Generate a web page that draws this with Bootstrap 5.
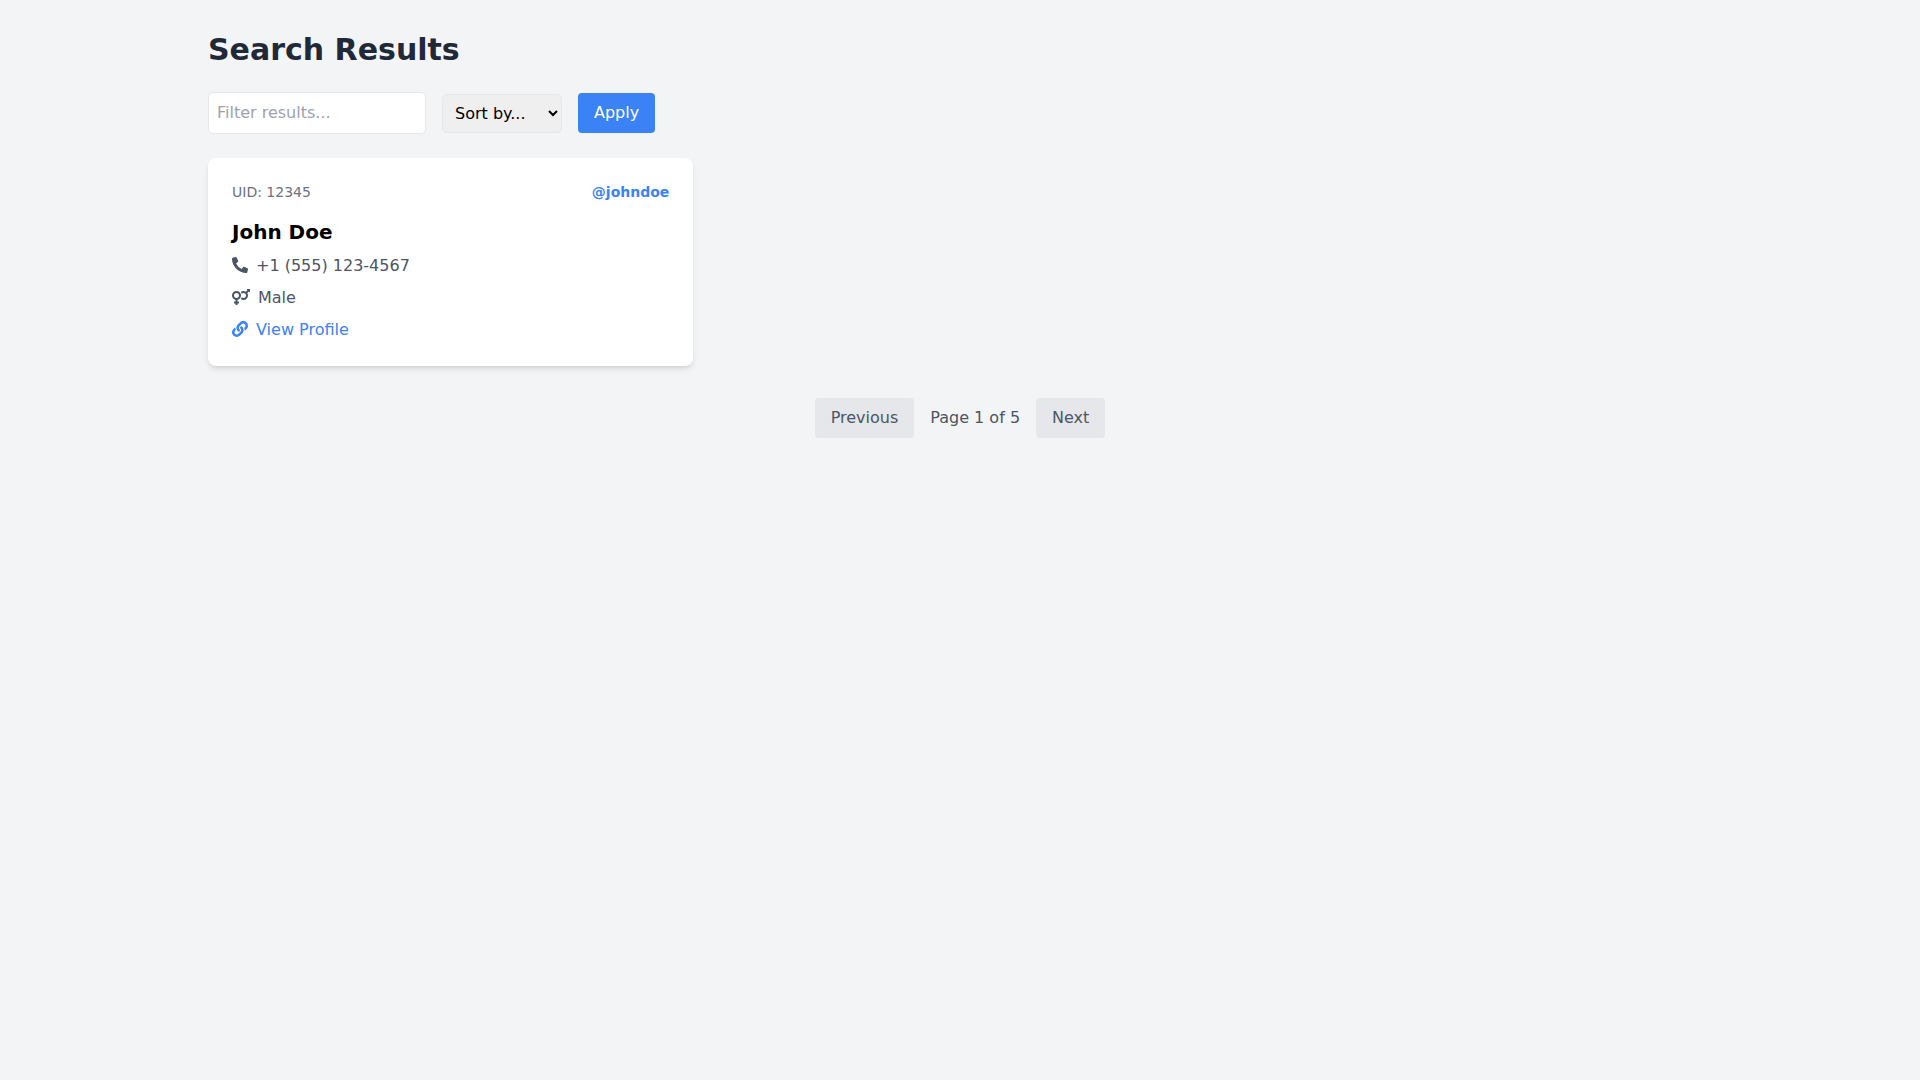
<!DOCTYPE html>
<html lang="en">
<head>
<meta charset="utf-8">
<title>Search Results</title>
<link href="https://cdn.jsdelivr.net/npm/bootstrap@5.3.0/dist/css/bootstrap.min.css" rel="stylesheet">
<style>
body{background:#f3f4f6;font-family:"DejaVu Sans",sans-serif;color:#1f2937;font-size:16px;line-height:24px}
.page-wrap{width:1536px;margin:0 auto;padding:32px 16px}
.page-title{font-size:30px;line-height:36px;font-weight:700;color:#1f2937;margin:0 0 24px}
.filter-input{width:218px;padding:8px;border:1px solid #e5e7eb;border-radius:5px;background:#fff;font:inherit;line-height:24px;color:#1f2937;outline:0}
.filter-input::placeholder{color:#9ca3af}
.sort-select{width:120px;height:39px;padding:8px;border:1px solid #e5e7eb;border-radius:5px;background:#efefef;font-size:16px;color:#000}
.apply-btn{background:#3b82f6;color:#fff;border:0;border-radius:4px;padding:8px 16px;font-size:16px;line-height:24px}
.result-grid{display:grid;grid-template-columns:repeat(3,1fr);gap:24px}
.result-card{background:#fff;border-radius:8px;padding:24px;box-shadow:0 4px 6px -1px rgba(0,0,0,.1),0 2px 4px -2px rgba(0,0,0,.1)}
.uid-text{font-size:14px;line-height:20px;color:#6b7280}
.user-handle{font-size:14px;line-height:20px;font-weight:700;color:#3b82f6;text-decoration:none}
.user-name{font-size:20px;line-height:28px;font-weight:700;color:#000;margin:0 0 8px}
.info-row{color:#4b5563;line-height:24px;margin-bottom:8px}
.info-row:last-child{margin-bottom:0}
.info-row svg{display:block;flex:none;fill:currentColor;height:16px;margin-bottom:2px}
.profile-link{color:#3b82f6;text-decoration:none}
.pager-wrap{margin-top:32px;color:#4b5563}
.pager-btn{background:#e5e7eb;color:#4b5563;border:0;border-radius:4px;padding:8px 16px;font-size:16px;line-height:24px}
</style>
</head>
<body>
<div class="page-wrap">
  <h1 class="page-title">Search Results</h1>
  <div class="d-flex align-items-center gap-3 mb-4">
    <input class="filter-input" type="text" placeholder="Filter results...">
    <select class="sort-select"><option>Sort by...</option><option>Name</option><option>UID</option></select>
    <button class="apply-btn" type="button">Apply</button>
  </div>
  <div class="result-grid">
    <div class="result-card">
      <div class="d-flex justify-content-between align-items-center mb-3">
        <span class="uid-text">UID: 12345</span>
        <a class="user-handle" href="#">@johndoe</a>
      </div>
      <h2 class="user-name">John Doe</h2>
      <div class="info-row d-flex align-items-center gap-2">
        <svg width="16" height="16" viewBox="0 0 512 512"><path d="M497.39 361.8l-112-48a24 24 0 0 0-28 6.9l-49.6 60.6A370.66 370.66 0 0 1 130.6 204.11l60.6-49.6a23.94 23.94 0 0 0 6.9-28l-48-112A24.16 24.16 0 0 0 122.6.61l-104 24A24 24 0 0 0 0 48c0 256.5 207.9 464 464 464a24 24 0 0 0 23.4-18.6l24-104a24.29 24.29 0 0 0-14.01-27.6z"/></svg>
        <span>+1 (555) 123-4567</span>
      </div>
      <div class="info-row d-flex align-items-center gap-2">
        <svg width="18" height="16" viewBox="0 0 576 512"><path d="M564 0h-79c-10.7 0-16 12.9-8.5 20.5l16.9 16.9-48.7 48.7C422.5 72.1 396.2 64 368 64c-33.7 0-64.6 11.6-89.2 30.9 14 16.7 25 36 32.1 57.1 14.5-14.8 34.7-24 57.1-24 44.1 0 80 35.9 80 80s-35.9 80-80 80c-22.3 0-42.6-9.2-57.1-24-7.1 21.1-18 40.4-32.1 57.1 24.5 19.4 55.5 30.9 89.2 30.9 79.5 0 144-64.5 144-144 0-28.2-8.1-54.5-22.1-76.7l48.7-48.7 16.9 16.9c2.4 2.4 5.4 3.5 8.4 3.5 6.2 0 12.1-4.8 12.1-12V12c0-6.6-5.4-12-12-12zM144 64C64.5 64 0 128.5 0 208c0 68.5 47.9 125.9 112 140.4V400H76c-6.6 0-12 5.4-12 12v40c0 6.6 5.4 12 12 12h36v36c0 6.6 5.4 12 12 12h40c6.6 0 12-5.4 12-12v-36h36c6.6 0 12-5.4 12-12v-40c0-6.6-5.4-12-12-12h-36v-51.6c64.1-14.6 112-71.9 112-140.4 0-79.5-64.5-144-144-144zm0 224c-44.1 0-80-35.9-80-80s35.9-80 80-80 80 35.9 80 80-35.9 80-80 80z"/></svg>
        <span>Male</span>
      </div>
      <div class="info-row d-flex align-items-center gap-2">
        <svg width="16" height="16" viewBox="0 0 512 512" class="profile-link"><path d="M326.612 185.391c59.747 59.809 58.927 155.698.36 214.59-.11.12-.24.25-.36.37l-67.2 67.2c-59.27 59.27-155.699 59.262-214.96 0-59.27-59.26-59.27-155.7 0-214.96l37.106-37.106c9.84-9.84 26.786-3.3 27.294 10.606.648 17.722 3.826 35.527 9.69 52.721 1.986 5.822.567 12.262-3.783 16.612l-13.087 13.087c-28.026 28.026-28.905 73.66-1.155 101.96 28.024 28.579 74.086 28.749 102.325.51l67.2-67.19c28.191-28.191 28.073-73.757 0-101.83-3.701-3.694-7.429-6.564-10.341-8.569a16.037 16.037 0 0 1-6.947-12.606c-.396-10.567 3.348-21.456 11.698-29.806l21.054-21.055c5.521-5.521 14.182-6.199 20.584-1.731a152.482 152.482 0 0 1 20.522 17.197zM467.547 44.449c-59.261-59.262-155.69-59.27-214.96 0l-67.2 67.2c-.12.12-.25.25-.36.37-58.566 58.892-59.387 154.781.36 214.59a152.454 152.454 0 0 0 20.521 17.196c6.402 4.468 15.064 3.789 20.584-1.731l21.054-21.055c8.35-8.35 12.094-19.239 11.698-29.806a16.037 16.037 0 0 0-6.947-12.606c-2.912-2.005-6.64-4.875-10.341-8.569-28.073-28.073-28.191-73.639 0-101.83l67.2-67.19c28.239-28.239 74.3-28.069 102.325.51 27.75 28.3 26.872 73.934-1.155 101.96l-13.087 13.087c-4.35 4.35-5.769 10.79-3.783 16.612 5.864 17.194 9.042 34.999 9.69 52.721.509 13.906 17.454 20.446 27.294 10.606l37.106-37.106c59.271-59.259 59.271-155.699.001-214.959z"/></svg>
        <a class="profile-link" href="#">View Profile</a>
      </div>
    </div>
  </div>
  <div class="pager-wrap d-flex justify-content-center align-items-center gap-3">
    <button class="pager-btn" type="button">Previous</button>
    <span>Page 1 of 5</span>
    <button class="pager-btn" type="button">Next</button>
  </div>
</div>
<script src="https://cdn.jsdelivr.net/npm/bootstrap@5.3.0/dist/js/bootstrap.bundle.min.js"></script>
</body>
</html>
